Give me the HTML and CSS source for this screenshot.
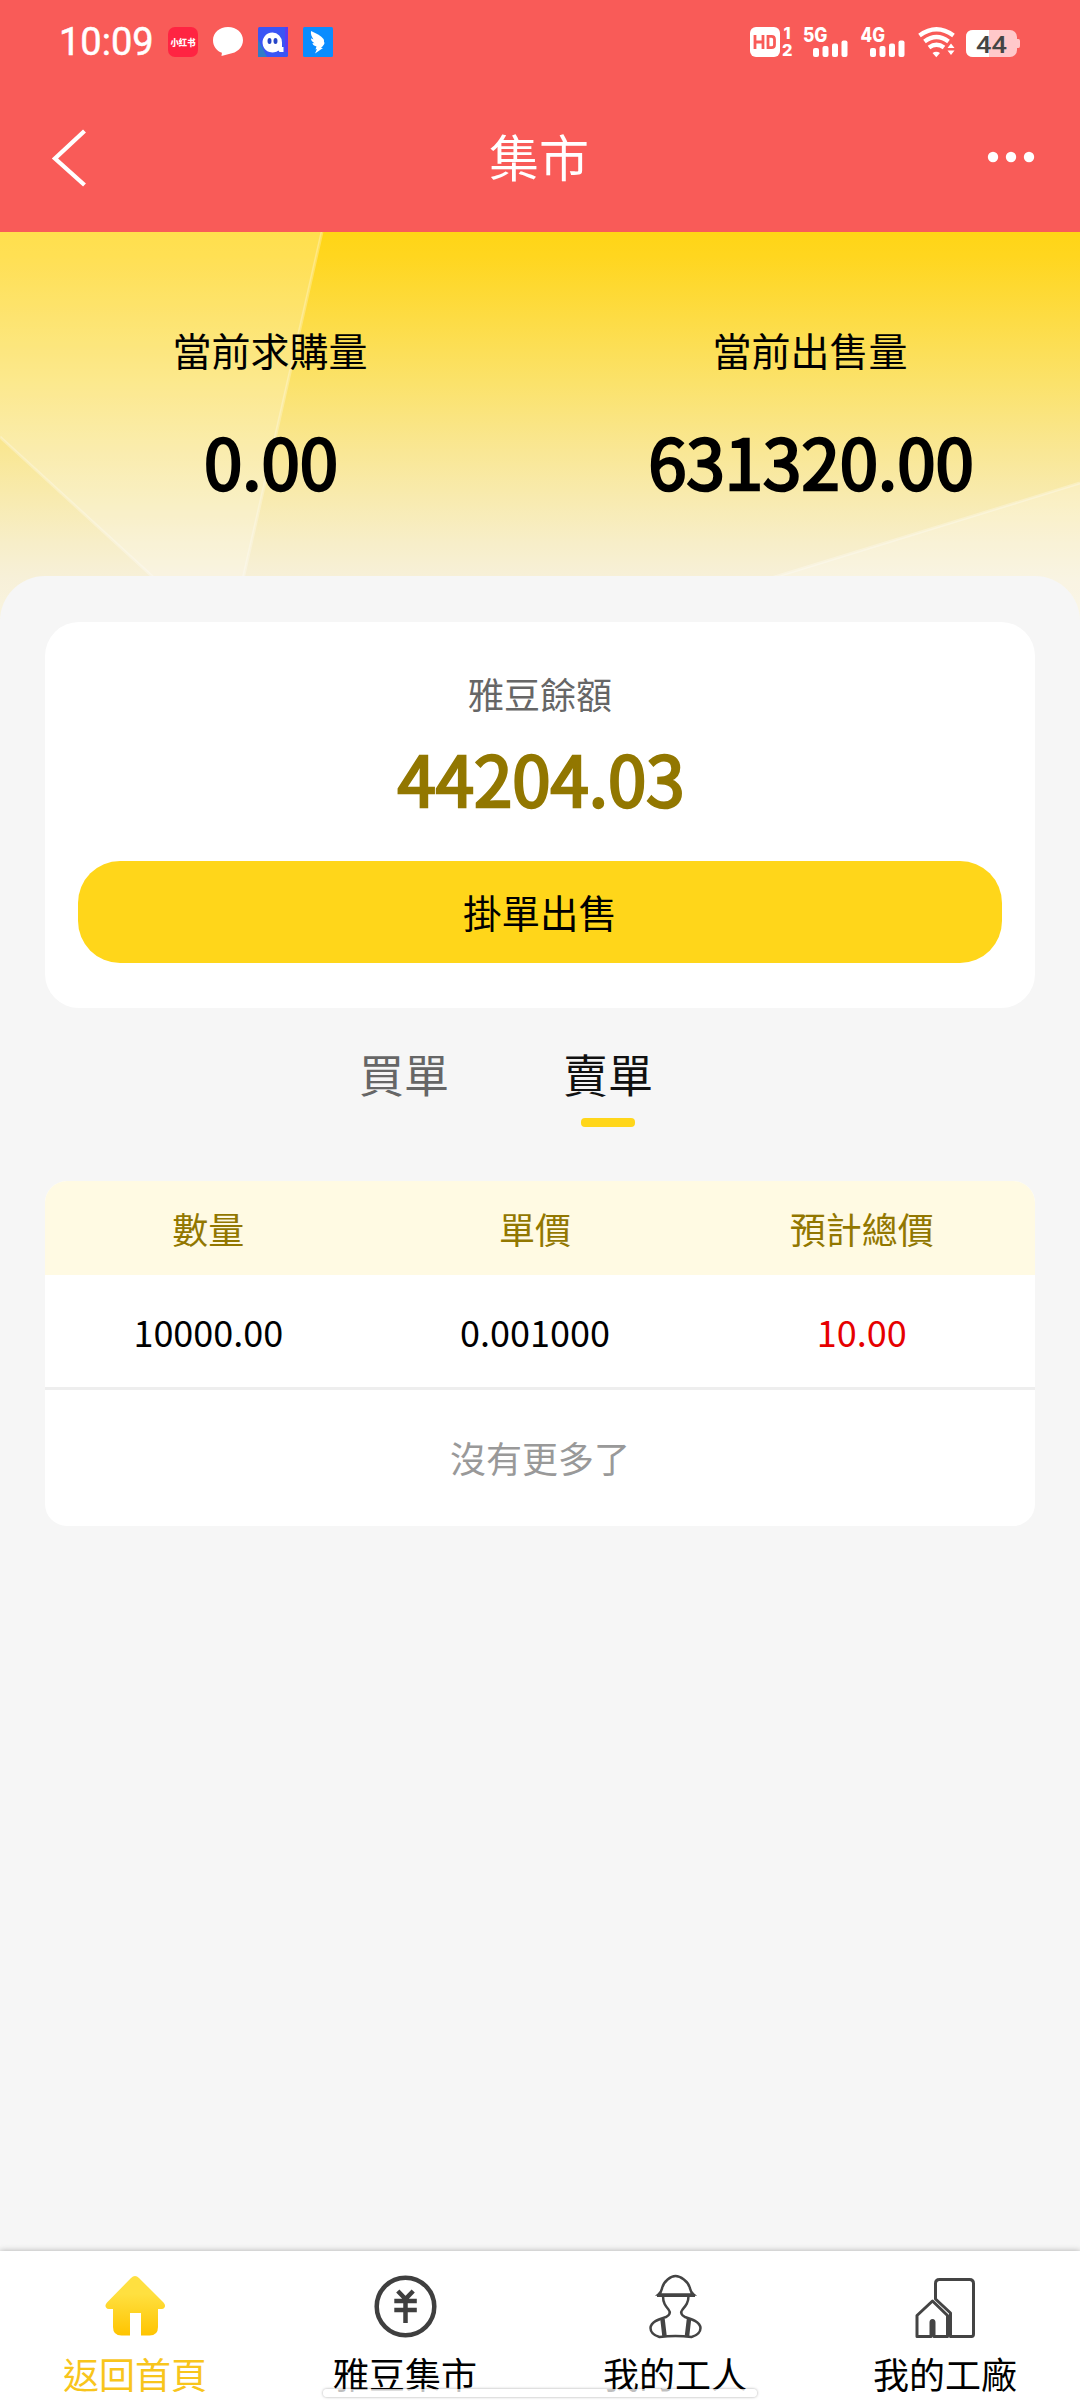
FILE: index.html
```html
<!DOCTYPE html>
<html lang="zh-Hant">
<head>
<meta charset="utf-8">
<title>集市</title>
<link rel="stylesheet" href="styles.css">
</head>
<body>
<div class="app">
  <header class="header">
    <div class="status">
      <span class="clock">10:09</span>
      <svg class="apps" width="165" height="30" viewBox="0 0 165 30">
        <rect width="30" height="30" rx="7" fill="#ff2442"/>
        <text class="app-name" x="15" y="18.500" text-anchor="middle" textLength="25" lengthAdjust="spacingAndGlyphs">小红书</text>
        <path d="M60 0c8.500 0 15 5.800 15 13.300C75 20.500 69 26 61 27l-7.500 2 .4-3.200C48.500 24 45 19.300 45 13.300 45 5.800 51.500 0 60 0z" fill="#fff"/>
        <rect x="90" width="30" height="30" rx="1.500" fill="#3a55f5"/>
        <path d="M90 12v18h9z" fill="#2f7cc8"/>
        <path d="M117 0h3v25h-3z" fill="#5b3cf0"/>
        <path d="M104.500 5.500a10 10 0 0 1 9.500 10v4.500h1.500v5h-4l-1-1.500a10 10 0 1 1-6-18z" fill="#fff"/>
        <ellipse cx="101.500" cy="14" rx="2" ry="3" fill="#2645c8"/><ellipse cx="107.500" cy="14" rx="2" ry="3" fill="#2645c8"/>
        <rect x="135" width="30" height="30" rx="1.500" fill="#0a8cff"/>
        <path d="M143 4c6 3 10 4.500 12.500 8 .6 1 .5 2 .5 3 1.500 1.500-1 4-3 6h2l-8 5.500 2-4.500-1.500.5 1-3c-3-1-4-2-4-3.500l2 .3c-2.500-1.500-3.500-3-3.500-5l2.500 1.200C143.500 9.500 142.500 7 143 4z" fill="#fff"/>
      </svg>
      <svg class="signals" width="271" height="30" viewBox="0 0 271 30">
        <rect width="30" height="30" rx="6" fill="#fff"/>
        <path d="M5 8v14M13 8v14M5 15h8M18 9.300h3.500q3 0 3 3v5.400q0 3-3 3H18z" fill="none" stroke="#f95b58" stroke-width="2.800"/>
        <g class="badge-text">
          <text x="33.500" y="12" font-size="16">1</text>
          <text x="32" y="29" font-size="16" textLength="10.500" lengthAdjust="spacingAndGlyphs">2</text>
          <text x="53" y="14.500" font-size="19.500" textLength="24.500" lengthAdjust="spacingAndGlyphs">5G</text>
          <text x="110.500" y="14.500" font-size="19.500" textLength="24.500" lengthAdjust="spacingAndGlyphs">4G</text>
        </g>
        <g fill="#fff">
          <rect x="63" y="21" width="6" height="9" rx="2"/><rect x="72.500" y="19" width="6" height="11" rx="2"/><rect x="82" y="16.500" width="6" height="13.500" rx="2"/><rect x="91.500" y="13.500" width="6" height="16.500" rx="2"/>
          <rect x="120" y="21" width="6" height="9" rx="2"/><rect x="129.500" y="19" width="6" height="11" rx="2"/><rect x="139" y="16.500" width="6" height="13.500" rx="2"/><rect x="148.500" y="13.500" width="6" height="16.500" rx="2"/>
          <path d="M182.500 26q3.700-2.500 7.500 0l-3.700 4.200z"/>
          <path d="M197.500 21l3.500-4.500 3.500 4.500zM197.500 23.500l3.500 4.500 3.500-4.500z"/>
        </g>
        <path d="M169.500 8.500q17-12.500 34 0M174.500 14.500q12-9 24 0M179 20.500q7.500-5.500 15 0" fill="none" stroke="#fff" stroke-width="4.300"/>
        <rect x="216" y="3" width="51" height="27" rx="7" fill="#ffc8ca"/>
        <path d="M267 12h1.500q1.500 0 1.500 2v5q0 2-1.500 2H267z" fill="#ffc8ca"/>
        <path d="M223 3h16v27h-16q-7 0-7-7V10q0-7 7-7z" fill="#fff"/>
        <text class="battery" x="241.500" y="26" text-anchor="middle" textLength="31" lengthAdjust="spacingAndGlyphs">44</text>
      </svg>
    </div>
    <div class="titlebar">
      <svg width="36" height="60" viewBox="0 0 36 60"><path d="M34.500 3L5 30.500 34.500 57" fill="none" stroke="#fff" stroke-width="4.300"/></svg>
      <h1 class="title">集市</h1>
      <svg class="more" width="48" height="12" viewBox="0 0 48 12" fill="#fff"><circle cx="6" cy="6" r="5.200"/><circle cx="24" cy="6" r="5.200"/><circle cx="42" cy="6" r="5.200"/></svg>
    </div>
  </header>

  <section class="hero">
    <svg class="rays" width="1080" height="400" viewBox="0 0 1080 400">
      <path d="M0 0H322L231 400H213L0 205z" fill="#fff" fill-opacity=".24"/>
      <path d="M1080 251V400H596z" fill="#fff" fill-opacity=".26"/>
      <path d="M322 0L231 400M0 205L213 400M1080 251L596 400" fill="none" stroke="#fff" stroke-opacity=".28" stroke-width="3"/>
    </svg>
    <div class="stat"><span class="stat-label">當前求購量</span><strong class="figure">0.00</strong></div>
    <div class="stat"><span class="stat-label">當前出售量</span><strong class="figure">631320.00</strong></div>
  </section>

  <main class="sheet">
    <section class="card">
      <span class="card-label">雅豆餘額</span>
      <strong class="figure figure-gold">44204.03</strong>
      <button class="sell">掛單出售</button>
    </section>
    <nav class="tabs">
      <a class="tab">買單</a>
      <a class="tab tab-active">賣單</a>
    </nav>
    <section class="table">
      <div class="row row-head"><span>數量</span><span>單價</span><span>預計總價</span></div>
      <div class="row"><span>10000.00</span><span>0.001000</span><span class="red">10.00</span></div>
      <div class="end">沒有更多了</div>
    </section>
  </main>

  <footer class="nav">
    <a class="nav-item nav-active">
      <svg width="66" height="66" viewBox="0 0 66 66"><defs><linearGradient id="gold" x2="0" y2="1"><stop offset=".3" stop-color="#ffe040"/><stop offset="1" stop-color="#ffc400"/></linearGradient></defs>
      <path d="M29 5q4-4 8 0L61.500 29.500q2.500 3 1 5-1 1.500-3 1.500H56v18q0 8.500-8.500 8.500H39V40H28v22.500h-8.500q-8.500 0-8.500-8.500V36H7q-2 0-3-1.500-1.500-2 1-5z" fill="url(#gold)"/></svg>
      <span>返回首頁</span>
    </a>
    <a class="nav-item">
      <svg width="66" height="66" viewBox="0 0 66 66" fill="none" stroke="#3f3f3f"><circle cx="33.500" cy="33.500" r="28.800" stroke-width="4.500"/><path d="M25.800 18l7.700 8 7.700-8M22.300 28h22.500M22.300 37h22.500M33.500 26v24" stroke-width="4.500"/></svg>
      <span>雅豆集市</span>
    </a>
    <a class="nav-item">
      <svg width="66" height="66" viewBox="0 0 66 66" fill="none" stroke="#444" stroke-width="2.500"><path d="M16.500 21.500c2.500-2 3-3.500 3.500-6C21.500 8 29 3 33.500 3s13 5 14.500 12.500c.5 2.500 1 4 3.500 6z"/><path d="M15 22.500h38" stroke-width="3"/><path d="M21 23c0 7 2.500 10 5.500 13.500 2.500 3 1 6-2.500 7.500C16 46.500 9 49 8.500 55c0 5 4 7.500 9 9q16-2 32 0c5-1.500 9-4.500 9-9-.5-6-8-8.500-15.500-11-3.500-1.500-5-4.500-2.500-7.500C43.500 33 46.500 30 46.500 23"/><path d="M20.500 46l2 17M47 46l-2 17" stroke-width="4.500"/></svg>
      <span>我的工人</span>
    </a>
    <a class="nav-item">
      <svg width="66" height="66" viewBox="0 0 66 66" fill="none" stroke="#444" stroke-width="3" stroke-linejoin="round"><path d="M23.500 26V10.500Q23.500 6.500 27.500 6.500H57.500q4 0 4 4V61q0 2.500-2 2.500H38.500V40z"/><path d="M5 42.500L20.500 28 35.500 42.500v21H22V49.500q0-2-1.500-2t-1.500 2v14H5z"/></svg>
      <span>我的工廠</span>
    </a>
    <i class="gesture"></i>
  </footer>
</div>
</body>
</html>
```
FILE: styles.css
```css
* { box-sizing: border-box; }
body { margin: 0; font-family: "Noto Sans CJK SC", sans-serif; color: #000; }
.app { width: 1080px; height: 2400px; display: flex; flex-direction: column; background: #f6f6f6; overflow: hidden; }

.header { height: 232px; background: #f95b58; color: #fff; }
.status { height: 84px; padding: 0 59px; display: flex; align-items: center; }
.status svg { overflow: visible; }
.clock { width: 109px; font: 400 38px/84px Roboto, sans-serif; -webkit-text-stroke: .5px #fff; }
.signals { margin-left: auto; }
.app-name { font-size: 9px; font-weight: 900; fill: #fff; }
.badge-text { font-family: Inter, sans-serif; font-weight: 800; fill: #fff; }
.battery { font: 500 24.500px Roboto, sans-serif; fill: #444; }
.titlebar { height: 148px; padding: 0 45px 0 50px; display: flex; align-items: center; justify-content: space-between; }
.title { margin: 0 0 0 5px; padding-bottom: 6px; font-size: 50px; font-weight: 400; line-height: 142px; }
.more { margin-bottom: 2px; }

.hero { position: relative; height: 400px; margin-bottom: -56px; display: flex; background: linear-gradient(#ffd516 0, #ffd61f 25px, #fbe26a 150px, #f9e795 220px, #f7eec8 310px, #f7f0d8 345px, #f9f5e2 400px); }
.rays { position: absolute; inset: 0; }
.stat { position: relative; flex: 1; padding-top: 87px; display: flex; flex-direction: column; align-items: center; }
.stat-label { font-size: 39px; line-height: 60px; }
.figure { padding-left: 2px; font-size: 69px; font-weight: 400; line-height: 100px; -webkit-text-stroke: 2.600px currentColor; }
.stat .figure { margin-top: 31px; }
.figure-gold { color: #927700; }

.sheet { position: relative; flex: 1; padding: 46px 45px 0; border-radius: 45px 45px 0 0; background: #f6f6f6; }
.card { height: 386px; padding: 46px 33px 0; display: flex; flex-direction: column; align-items: center; border-radius: 34px; background: #fff; }
.card-label { font-size: 36px; line-height: 50px; color: #666; }
.card .figure { margin-top: 9px; }
.sell { width: 100%; height: 102px; margin-top: 34px; padding: 0 0 3px; border: 0; border-radius: 42px; background: #ffd61a; color: #000; font-family: inherit; font-size: 38.500px; }
.tabs { height: 173px; padding: 36px 0 0 314px; display: flex; gap: 114px; font-size: 45px; line-height: 60px; color: #666; }
.tab { width: 90px; }
.tab-active { display: flex; flex-direction: column; align-items: center; color: #111; }
.tab-active::after { content: ""; width: 54px; height: 9px; margin-top: 14px; border-radius: 4px; background: #ffd61a; }
.table { height: 345px; border-radius: 22px; background: #fff; overflow: hidden; font-size: 36px; }
.row { height: 115px; display: flex; border-bottom: 3px solid #eee; line-height: 113px; text-align: center; }
.row span { width: 33%; }
.row-head { height: 94px; border: 0; background: #fffae3; color: #927700; line-height: 94px; }
.red { color: #e60000; }
.end { line-height: 135px; text-align: center; color: #999; }

.nav { position: relative; height: 149px; display: flex; background: #fff; box-shadow: 0 0 6px rgba(0,0,0,.3); font-size: 36px; }
.nav-item { flex: 1; padding-top: 22px; display: flex; flex-direction: column; align-items: center; }
.nav-item span { margin-top: 10px; line-height: 48px; }
.nav-active { color: #f8c51c; }
.gesture { position: absolute; left: 323px; bottom: 3px; width: 434px; height: 8px; border-radius: 4px; background: rgba(255,255,255,.75); box-shadow: 0 0 3px rgba(0,0,0,.35); }
```
